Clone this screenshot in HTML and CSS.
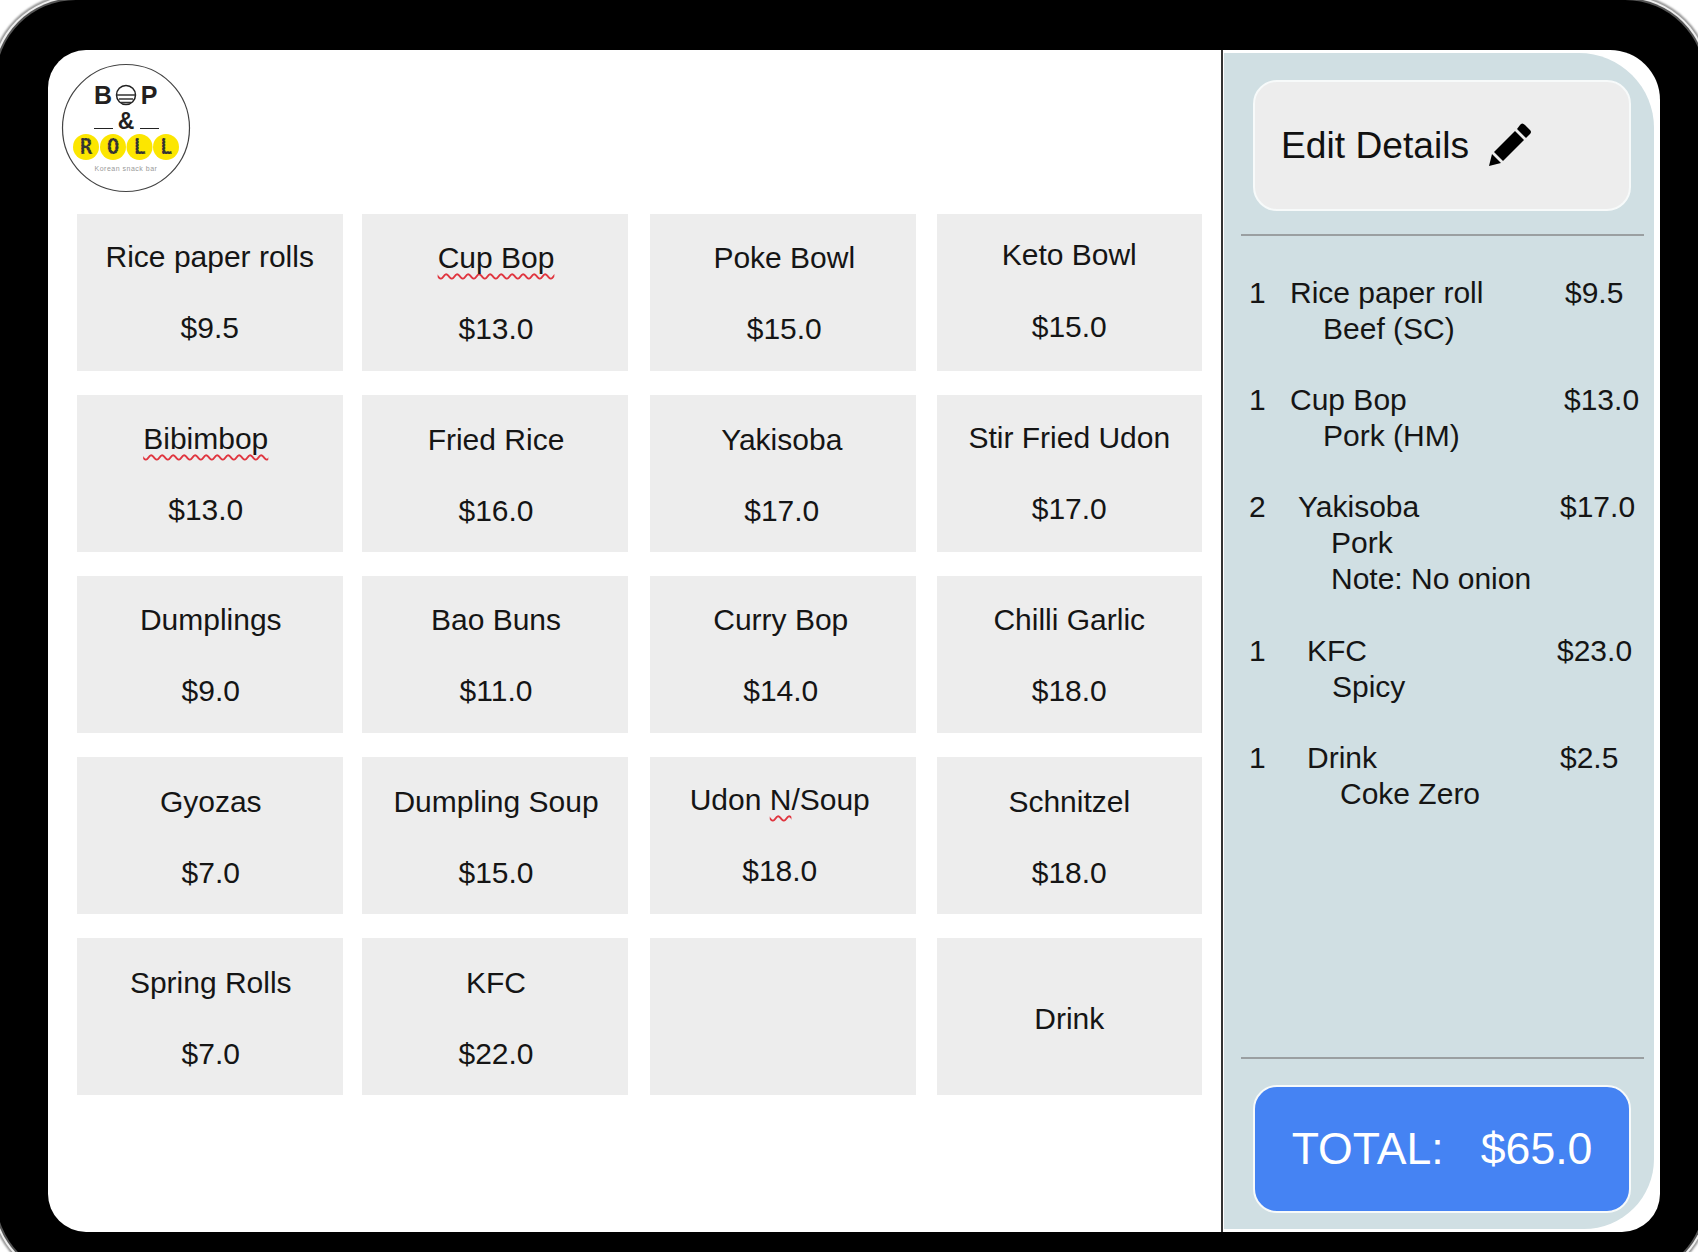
FILE: index.html
```html
<!DOCTYPE html>
<html lang="en">
<head>
  <meta charset="UTF-8" />
  <title>Bop &amp; Roll POS</title>
  <link rel="stylesheet" href="styles.css">
</head>
<body>
  <div class="tablet">
    <div class="screen">
      <main class="menu">
        <svg class="logo" viewBox="0 0 130 130" role="img" aria-label="Bop and Roll logo">
          <circle cx="65" cy="65" r="63.5" fill="#fff" stroke="#444" stroke-width="1.2" />
          <text class="logo-bop" x="42" y="41" text-anchor="middle">B</text>
          <text class="logo-bop" x="88" y="41" text-anchor="middle">P</text>
          <circle cx="65" cy="32" r="9.5" fill="none" stroke="#222" stroke-width="1.5" />
          <path d="M55.500 32h19M58 36h14M60 39.500h10" stroke="#333" stroke-width="1.3" />
          <text class="logo-amp" x="65" y="66" text-anchor="middle">&amp;</text>
          <path d="M33 65.500h19M79 65.500h19" stroke="#222" stroke-width="1.2" />
          <circle cx="25" cy="84" r="13" fill="#fce600" />
          <circle cx="52" cy="84" r="13" fill="#fce600" />
          <circle cx="78.500" cy="84" r="13" fill="#fce600" />
          <circle cx="105" cy="84" r="13" fill="#fce600" />
          <text class="logo-roll" x="25" y="91" text-anchor="middle">R</text>
          <text class="logo-roll" x="52" y="91" text-anchor="middle">O</text>
          <text class="logo-roll" x="78.500" y="91" text-anchor="middle">L</text>
          <text class="logo-roll" x="105" y="91" text-anchor="middle">L</text>
          <text class="logo-tag" x="65" y="108" text-anchor="middle">Korean snack bar</text>
        </svg>

        <div class="grid">
          <div class="card up-2"><div>Rice paper rolls</div><div>$9.5</div></div>
          <div class="card up-1"><div><span class="typo">Cup Bop</span></div><div>$13.0</div></div>
          <div class="card up-1 to-right"><div>Poke Bowl</div><div>$15.0</div></div>
          <div class="card up-3"><div>Keto Bowl</div><div>$15.0</div></div>

          <div class="card up-1 to-left"><div><span class="typo">Bibimbop</span></div><div>$13.0</div></div>
          <div class="card"><div>Fried Rice</div><div>$16.0</div></div>
          <div class="card left-1"><div>Yakisoba</div><div>$17.0</div></div>
          <div class="card up-2"><div>Stir Fried Udon</div><div>$17.0</div></div>

          <div class="card up-1 right-1"><div>Dumplings</div><div>$9.0</div></div>
          <div class="card up-1"><div>Bao Buns</div><div>$11.0</div></div>
          <div class="card up-1 left-2"><div>Curry Bop</div><div>$14.0</div></div>
          <div class="card up-1"><div>Chilli Garlic</div><div>$18.0</div></div>

          <div class="card right-1"><div>Gyozas</div><div>$7.0</div></div>
          <div class="card"><div>Dumpling Soup</div><div>$15.0</div></div>
          <div class="card up-2 left-3"><div>Udon <span class="typo">N</span>/Soup</div><div>$18.0</div></div>
          <div class="card"><div>Schnitzel</div><div>$18.0</div></div>

          <div class="card right-1"><div>Spring Rolls</div><div>$7.0</div></div>
          <div class="card"><div>KFC</div><div>$22.0</div></div>
          <div class="card"></div>
          <div class="card"><div>Drink</div></div>
        </div>
      </main>

      <aside class="order">
        <button class="edit-btn">
          Edit Details
          <svg class="pencil" viewBox="0 0 44 44" aria-hidden="true">
            <path d="M0 44 3 32 12 41Z" />
            <path d="M5 30 26 9 35 18 14 39Z" />
            <path d="M28 7 31 3Q33 0 36 3L41 8Q43 10 41 12L37 16Z" />
          </svg>
        </button>
        <hr class="rule rule-top">

        <div class="items">
          <div class="item">
            <div>1</div>
            <div>Rice paper roll<div class="sub">Beef (SC)</div></div>
            <div class="price price-a">$9.5</div>
          </div>
          <div class="item">
            <div>1</div>
            <div>Cup Bop<div class="sub">Pork (HM)</div></div>
            <div class="price price-b">$13.0</div>
          </div>
          <div class="item">
            <div>2</div>
            <div class="name-1">Yakisoba<div class="sub">Pork<br>Note: No onion</div></div>
            <div class="price price-c">$17.0</div>
          </div>
          <div class="item">
            <div>1</div>
            <div class="name-2">KFC<div class="sub sub-short">Spicy</div></div>
            <div class="price">$23.0</div>
          </div>
          <div class="item">
            <div>1</div>
            <div class="name-2">Drink<div class="sub">Coke Zero</div></div>
            <div class="price price-c">$2.5</div>
          </div>
        </div>

        <hr class="rule">
        <button class="total-btn">TOTAL:   $65.0</button>
      </aside>
    </div>
  </div>
</body>
</html>
```

FILE: styles.css
```css
html, body {
  height: 100%;
}
body {
  margin: 0;
  height: 1252px;
  overflow: hidden;
  background: #fff;
  font-family: 'Liberation Sans', Arial, sans-serif;
  color: #151515;
}
.tablet {
  box-sizing: border-box;
  width: 1709px;
  height: 1277px;
  margin-left: -4px;
  padding: 50px 45px 45px 52px;
  background: #000;
  border-radius: 80px;
  box-shadow: 0 0 0 2px #555, 0 0 0 4px #eee, 0 0 2px 6px #999;
}
.screen {
  display: flex;
  height: 100%;
  background: #fff;
  border-radius: 38px 50px 38px 38px;
  overflow: hidden;
}

/* left side */
.menu {
  box-sizing: border-box;
  width: 1175px;
  padding: 13px 0 0 13px;
  border-right: 2px solid #333;
  flex-shrink: 0;
}
.logo {
  display: block;
  width: 130px;
  height: 130px;
}
.logo-bop {
  font: bold 25px 'Liberation Sans', Arial, sans-serif;
  fill: #231f20;
}
.logo-amp {
  font: bold 23px 'Liberation Sans', Arial, sans-serif;
  fill: #231f20;
}
.logo-roll {
  font: bold 21px 'DejaVu Sans Mono', monospace;
  fill: #333;
  stroke: #fce600;
  stroke-width: .6;
  stroke-dasharray: 1 2;
}
.logo-tag {
  font: 7px 'Liberation Sans', Arial, sans-serif;
  letter-spacing: .5px;
  fill: #999;
}
.grid {
  display: grid;
  grid-template-columns: repeat(4, 265.5px);
  grid-auto-rows: 157px;
  column-gap: 21px;
  row-gap: 24px;
  margin: 21px 0 0 16px;
}
.card {
  display: flex;
  flex-direction: column;
  justify-content: center;
  gap: 35.5px;
  box-sizing: border-box;
  padding-top: 4px;
  background: #ededed;
  font-size: 30px;
  line-height: 36px;
  text-align: center;
}
.card:nth-child(4n+2) {
  margin: 0 1px 0 -1.5px;
  padding-left: 2px;
}
/* the labels were not quite centred in their boxes */
.to-left {
  padding-right: 8px;
}
.left-1 {
  padding-right: 2px;
}
.left-2 {
  padding-right: 4px;
}
.left-3 {
  padding-right: 6px;
}
.to-right {
  padding-left: 3px;
}
.right-1 {
  padding-left: 2px;
}
.up-1 {
  padding-bottom: 2px;
}
.up-2 {
  padding-bottom: 4px;
}
.up-3 {
  padding-bottom: 7px;
}
.typo {
  text-decoration: underline wavy #e0353f 1.5px;
  text-underline-offset: 5px;
  text-decoration-skip-ink: none;
}

/* right side */
.order {
  flex: 1;
  display: flex;
  flex-direction: column;
  box-sizing: border-box;
  margin: 3px 6px 3px 1px;
  padding: 27px 10px 16px 17px;
  background: #d0dfe3;
  border-radius: 0 75px 70px 0;
}
.edit-btn, .total-btn {
  box-sizing: border-box;
  width: 378px;
  margin-left: 12px;
  border: 2px solid #f7fafa;
  border-radius: 24px;
  font-family: inherit;
  cursor: pointer;
}
.edit-btn {
  display: flex;
  align-items: center;
  gap: 20px;
  height: 131px;
  padding: 0 0 0 26px;
  background: #ededed;
  color: #111;
  font-size: 37.2px;
}
.pencil {
  width: 44px;
  height: 44px;
  margin-bottom: 3px;
  fill: #000;
}
.rule {
  width: 100%;
  margin: 0;
  border: none;
  border-top: 2px solid #9a9fa1;
}
.rule-top {
  margin-top: 23px;
}
.items {
  flex: 1;
  display: flex;
  flex-direction: column;
  gap: 35.2px;
  padding: 39px 0 0 8px;
  font-size: 30px;
  line-height: 36px;
}
.item {
  display: grid;
  grid-template-columns: 41px 267px auto;
}
.name-1 {
  padding-left: 8px;
}
.name-2 {
  padding-left: 17px;
}
.sub {
  padding-left: 33px;
}
.sub-short {
  padding-left: 25px;
}
.price-a {
  padding-left: 8px;
}
.price-b {
  padding-left: 7px;
}
.price-c {
  padding-left: 3px;
}
.total-btn {
  height: 128px;
  margin-top: 26px;
  padding: 0;
  background: #4583f3;
  color: #fff;
  font-size: 44.6px;
  white-space: pre;
}
```
